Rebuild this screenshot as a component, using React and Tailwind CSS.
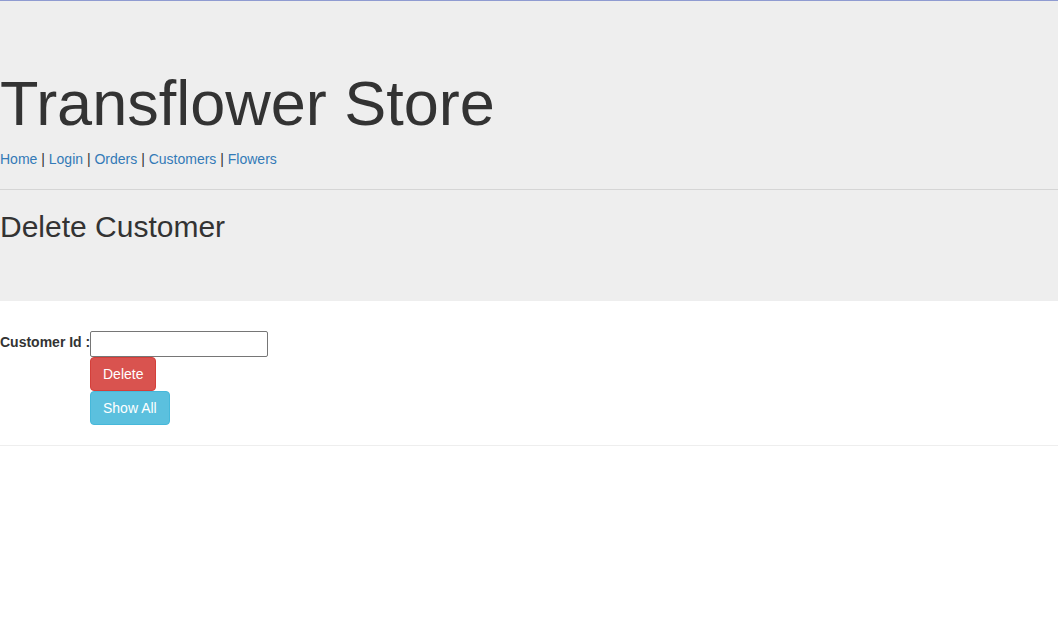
export default function App() {
  const links = ["Home", "Login", "Orders", "Customers", "Flowers"];

  return (
    <div className="min-h-[624px] bg-white text-[14px] leading-[20px] text-[#333]" style={{ fontFamily: '"Liberation Sans", Arial, sans-serif' }}>
      <div className="h-px bg-[#8f9bd1]" />

      <header className="bg-[#eee] pt-[48px] pb-[48px]">
        <h1 className="mt-[20px] mb-[11px] text-[63px] leading-[69px] font-normal">Transflower Store</h1>
        <nav className="h-[20px]">
          {links.map((label, i) => (
            <span key={label}>
              {i > 0 && " | "}
              <a href="#" className="text-[#337ab7] hover:underline">
                {label}
              </a>
            </span>
          ))}
        </nav>
        <hr className="mt-[20px] mb-[20px] border-0 border-t border-[#d5d5d5]" />
        <h2 className="mb-[10px] text-[30px] leading-[33px] font-normal">Delete Customer</h2>
      </header>

      <form className="grid grid-cols-[90px_auto] justify-start pt-[30px]" onSubmit={(e) => e.preventDefault()}>
        <label htmlFor="customerId" className="mt-[1px] font-bold whitespace-nowrap">
          Customer Id :
        </label>
        <input
          id="customerId"
          type="text"
          className="h-[26px] w-[178px] rounded-[2px] border border-[#767676] bg-white px-[2px] outline-none"
        />
        <div />
        <button
          type="submit"
          className="h-[34px] w-fit rounded-[4px] border border-[#d43f3a] bg-[#d9534f] px-[12px] text-white hover:bg-[#c9302c]"
        >
          Delete
        </button>
        <div />
        <button
          type="button"
          className="h-[34px] w-fit rounded-[4px] border border-[#46b8da] bg-[#5bc0de] px-[12px] text-white hover:bg-[#31b0d5]"
        >
          Show All
        </button>
      </form>

      <hr className="mt-[20px] border-0 border-t border-[#eee]" />
    </div>
  );
}
